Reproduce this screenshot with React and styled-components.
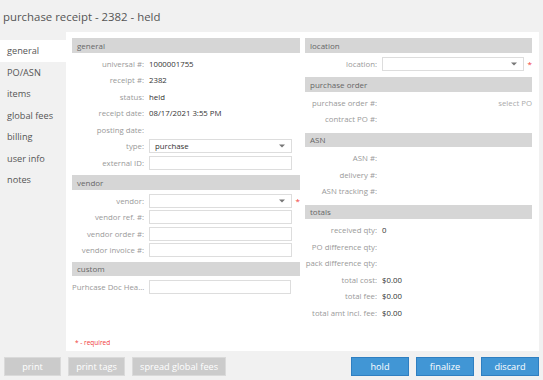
import React from "react";
import styled, { createGlobalStyle } from "styled-components";

const GlobalStyle = createGlobalStyle`
  * { box-sizing: border-box; }
  html, body { margin: 0; padding: 0; }
  body {
    background: #f1f1f1;
    font-family: "Open Sans", "Liberation Sans", sans-serif;
    width: 543px;
    height: 380px;
    overflow: hidden;
  }
`;

const Page = styled.div`
  width: 543px;
  height: 380px;
  display: flex;
  flex-direction: column;
`;

const TitleBar = styled.div`
  height: 32px;
  padding: 0 3px;
  display: flex;
  align-items: center;
  font-size: 11.4px;
  color: #555;
`;

const Body = styled.div`
  display: flex;
  height: 319px;
  padding-right: 4px;
`;

const Sidebar = styled.nav`
  width: 66px;
  flex-shrink: 0;
  padding-top: 8px;
  display: flex;
  flex-direction: column;
`;

const NavItem = styled.div`
  height: 21.5px;
  display: flex;
  align-items: center;
  padding-left: 7px;
  font-size: 9.2px;
  color: #555;
  background: ${({ active }) => (active ? "#fff" : "transparent")};
`;

const Panel = styled.div`
  flex: 1;
  background: #fff;
  padding: 6px 7px 4px 6px;
  display: flex;
  flex-direction: column;
`;

const Columns = styled.div`
  display: grid;
  grid-template-columns: 228px 227px;
  column-gap: 5px;
  align-items: start;
`;

const Column = styled.div`
  display: flex;
  flex-direction: column;
`;

const SectionHeader = styled.div`
  height: 14.5px;
  background: #d6d6d6;
  display: flex;
  align-items: center;
  padding-left: 5px;
  font-size: 8px;
  color: #666;
  margin-top: ${({ first, gap }) => (first ? 0 : gap || 4)}px;
  margin-bottom: 3px;
`;

const Row = styled.div`
  height: 16.5px;
  display: flex;
  align-items: center;
`;

const Label = styled.div`
  width: ${({ left }) => (left ? 74 : 72)}px;
  flex-shrink: 0;
  text-align: ${({ left }) => (left ? "left" : "right")};
  font-size: 7.8px;
  color: #999;
  white-space: nowrap;
  overflow: hidden;
  text-overflow: ellipsis;
  margin-right: ${({ left }) => (left ? 3 : 5)}px;
`;

const Value = styled.div`
  font-size: 7.8px;
  color: #333;
  white-space: nowrap;
`;

const Input = styled.div`
  width: ${({ w }) => w || 143}px;
  height: 14px;
  border: 1px solid #ddd;
  background: #fff;
  display: flex;
  align-items: center;
  justify-content: space-between;
  padding: 0 6px 0 5px;
  font-size: 7.8px;
  color: #333;
`;

const Required = styled.span`
  color: #f03a3a;
  font-size: 8px;
  margin-left: 4px;
  line-height: 1;
`;

const Link = styled.div`
  margin-left: auto;
  font-size: 7.8px;
  color: #aaa;
`;

const Note = styled.div`
  margin-top: auto;
  font-size: 6.5px;
  color: #f03a3a;
  padding-left: 3px;
`;

const Footer = styled.div`
  display: flex;
  align-items: center;
  padding: 6px 4px 0 4px;
  gap: 7px;
`;

const Button = styled.button`
  height: 19px;
  min-width: ${({ primary }) => (primary ? 58 : 57)}px;
  padding: 0 7px;
  font-family: inherit;
  font-size: 9.2px;
  color: #fff;
  background: ${({ primary }) => (primary ? "#4196d5" : "#cbcbcb")};
  border: 1px solid ${({ primary }) => (primary ? "#2f7fc1" : "#dadada")};
  margin-left: ${({ push }) => (push ? "auto" : "0")};
`;

const Arrow = () => (
  <svg width="6" height="4" viewBox="0 0 6 4">
    <path d="M0 0.5 L6 0.5 L3 3.5 Z" fill="#777" />
  </svg>
);

const Field = ({ label, value, input, select, required, link, left, inputWidth }) => (
  <Row>
    <Label left={left}>{label}</Label>
    {value && <Value>{value}</Value>}
    {(input || select) && (
      <Input w={inputWidth}>
        <span>{typeof select === "string" ? select : ""}</span>
        {select && <Arrow />}
      </Input>
    )}
    {required && <Required>*</Required>}
    {link && <Link>{link}</Link>}
  </Row>
);

const navItems = ["general", "PO/ASN", "items", "global fees", "billing", "user info", "notes"];

const App = () => (
  <Page>
    <GlobalStyle />
    <TitleBar>purchase receipt - 2382 - held</TitleBar>
    <Body>
      <Sidebar>
        {navItems.map((item) => (
          <NavItem key={item} active={item === "general"}>
            {item}
          </NavItem>
        ))}
      </Sidebar>
      <Panel>
        <Columns>
          <Column>
            <SectionHeader first>general</SectionHeader>
            <Field label="universal #:" value="1000001755" />
            <Field label="receipt #:" value="2382" />
            <Field label="status:" value="held" />
            <Field label="receipt date:" value="08/17/2021 3:55 PM" />
            <Field label="posting date:" />
            <Field label="type:" select="purchase" />
            <Field label="external ID:" input />
            <SectionHeader>vendor</SectionHeader>
            <Field label="vendor:" select required />
            <Field label="vendor ref. #:" input />
            <Field label="vendor order #:" input />
            <Field label="vendor invoice #:" input />
            <SectionHeader gap={3}>custom</SectionHeader>
            <Field label="Purhcase Doc Header" input left inputWidth={142} />
          </Column>
          <Column>
            <SectionHeader first>location</SectionHeader>
            <Field label="location:" select required />
            <SectionHeader gap={5}>purchase order</SectionHeader>
            <Field label="purchase order #:" link="select PO" />
            <Field label="contract PO #:" />
            <SectionHeader gap={5}>ASN</SectionHeader>
            <Field label="ASN #:" />
            <Field label="delivery #:" />
            <Field label="ASN tracking #:" />
            <SectionHeader gap={5}>totals</SectionHeader>
            <Field label="received qty:" value="0" />
            <Field label="PO difference qty:" />
            <Field label="pack difference qty:" />
            <Field label="total cost:" value="$0.00" />
            <Field label="total fee:" value="$0.00" />
            <Field label="total amt incl. fee:" value="$0.00" />
          </Column>
        </Columns>
        <Note>* - required</Note>
      </Panel>
    </Body>
    <Footer>
      <Button>print</Button>
      <Button>print tags</Button>
      <Button>spread global fees</Button>
      <Button primary push>hold</Button>
      <Button primary>finalize</Button>
      <Button primary>discard</Button>
    </Footer>
  </Page>
);

export default App;
